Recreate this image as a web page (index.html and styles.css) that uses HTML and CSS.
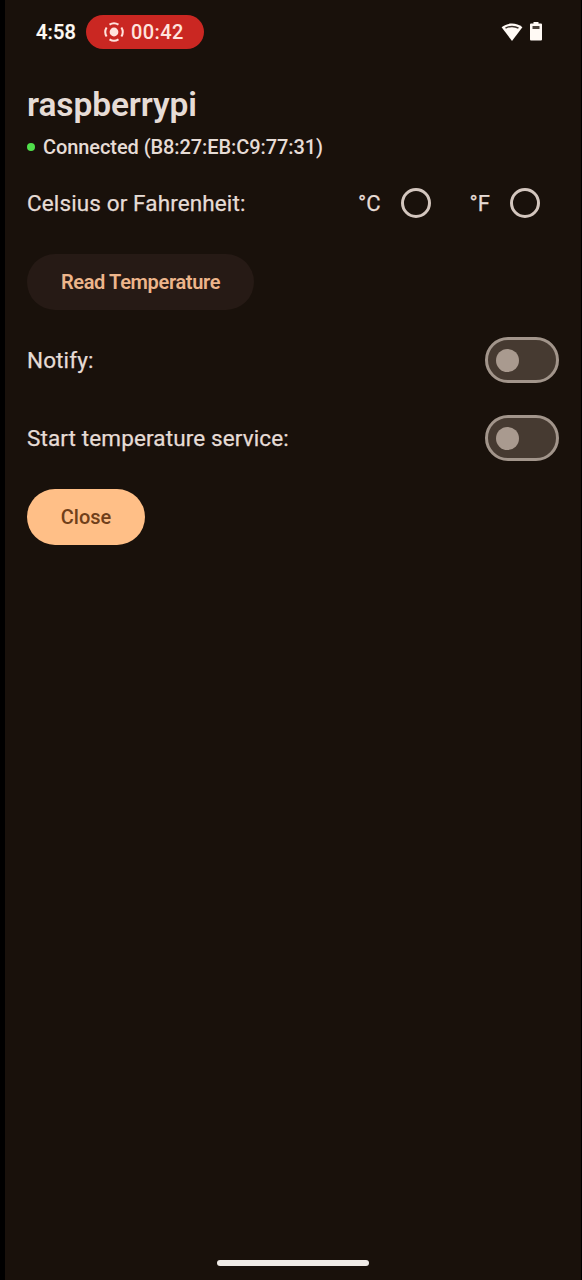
FILE: index.html
```html
<!DOCTYPE html>
<html lang="en">
<head>
<meta charset="utf-8">
<title>raspberrypi</title>
<link rel="stylesheet" href="styles.css">
</head>
<body>
<div class="screen">
  <header class="status-bar">
    <span class="clock">4:58</span>
    <div class="recording">
      <svg class="record-icon" viewBox="0 0 20 20" width="20" height="20">
        <circle cx="10" cy="10" r="4.400" fill="currentColor"/>
        <path d="M5.500 2.600A8.600 8.600 0 0 1 14.500 2.600M17.400 5.500A8.600 8.600 0 0 1 17.400 14.500M14.500 17.400A8.600 8.600 0 0 1 5.500 17.400M2.600 14.500A8.600 8.600 0 0 1 2.600 5.500" fill="none" stroke="currentColor" stroke-width="2"/>
      </svg>
      <span class="timer">00:42</span>
    </div>
    <svg class="wifi" viewBox="0 0 22 18" width="22" height="18">
      <path d="M11 18L.6 4.200C6.500-.7 15.500-.7 21.400 4.200Z" fill="#fffaf5"/>
      <path d="M4.500 5.200C8.200 2.800 13.800 2.800 17.500 5.200" fill="none" stroke="#39302a" stroke-width="1.500"/>
    </svg>
    <svg class="battery" viewBox="0 0 12 19" width="12" height="19">
      <path d="M3.500 0h5v1.500H11a1 1 0 0 1 1 1v15a1 1 0 0 1-1 1H1a1 1 0 0 1-1-1V2.500a1 1 0 0 1 1-1h2.500Z" fill="#fffaf5"/>
      <path d="M2.500 4h7v3h-7Z" fill="#4b423b"/>
    </svg>
  </header>
  <main class="content">
    <h1 class="title">raspberrypi</h1>
    <div class="connection"><i class="dot"></i><span>Connected (B8:27:EB:C9:77:31)</span></div>
    <div class="row units">
      <span class="label">Celsius or Fahrenheit:</span>
      <div class="options">
        <label class="option"><span>°C</span><i class="radio"></i></label>
        <label class="option"><span>°F</span><i class="radio"></i></label>
      </div>
    </div>
    <button class="button read">Read Temperature</button>
    <div class="row notify"><span class="label">Notify:</span><i class="switch"></i></div>
    <div class="row service"><span class="label">Start temperature service:</span><i class="switch"></i></div>
    <button class="button close">Close</button>
  </main>
  <div class="home-bar"></div>
</div>
</body>
</html>
```
FILE: styles.css
```css
* { box-sizing: border-box; }
body { margin: 0; background: #000; font-family: Roboto, sans-serif; }
.screen {
  display: flex;
  flex-direction: column;
  width: 576px;
  height: 1280px;
  margin-left: 5px;
  background: #19110b;
  color: #e6dcd6;
}
.status-bar {
  display: flex;
  align-items: center;
  height: 63px;
  padding: 0 39px 0 31px;
}
.clock { width: 50px; font-size: 20px; font-weight: 500; letter-spacing: .2px; color: #fffaf5; -webkit-text-stroke: .25px currentColor; }
.recording {
  display: flex;
  align-items: center;
  width: 118px;
  height: 34px;
  padding-left: 18px;
  border-radius: 17px;
  background: #ca2722;
  color: #ffe3dd;
}
.timer { margin-left: 7px; font-size: 20px; font-weight: 500; letter-spacing: .4px; }
.wifi { margin-left: auto; }
.battery { margin-left: 7px; }
.content { display: flex; flex-direction: column; align-items: flex-start; padding: 22px 22px 0; }
.title { margin: 0; font-size: 33.5px; line-height: 40px; font-weight: 600; letter-spacing: -.1px; white-space: nowrap; }
.connection {
  display: flex;
  align-items: center;
  height: 24px;
  margin-top: 10px;
  font-size: 20px;
  font-weight: 500;
  letter-spacing: -.08px;
  white-space: nowrap;
}
.dot { width: 8px; height: 8px; margin-right: 8px; border-radius: 50%; background: #50df4b; }
.row { display: flex; align-items: center; justify-content: space-between; width: 532px; height: 46px; }
.label { font-size: 22.5px; letter-spacing: .12px; white-space: nowrap; -webkit-text-stroke: .25px currentColor; }
.units { margin-top: 21px; }
.options { display: flex; gap: 39px; margin-right: 19px; }
.option { display: flex; align-items: center; gap: 20px; font-size: 22px; -webkit-text-stroke: .25px currentColor; }
.radio { width: 30px; height: 30px; border: 3px solid #d3c6be; border-radius: 50%; }
.button { height: 56px; padding: 0; border: 0; border-radius: 28px; font-family: inherit; font-size: 20px; font-weight: 500; white-space: nowrap; }
.read { width: 227px; margin-top: 28px; background: #261a15; color: #edb58b; font-weight: 600; letter-spacing: -.35px; }
.notify { margin-top: 27px; }
.service { margin-top: 32px; }
.switch { display: flex; align-items: center; width: 74px; height: 46px; padding-left: 8px; border: 3px solid #a2958b; border-radius: 23px; background: #463a31; }
.switch::before { content: ""; width: 23px; height: 23px; border-radius: 50%; background: #a99a8f; }
.close { width: 118px; margin-top: 28px; background: #ffbf87; color: #70401a; }
.home-bar { width: 152px; height: 6px; margin: auto 0 14px 212px; border-radius: 3px; background: #f0ebe7; }
```
